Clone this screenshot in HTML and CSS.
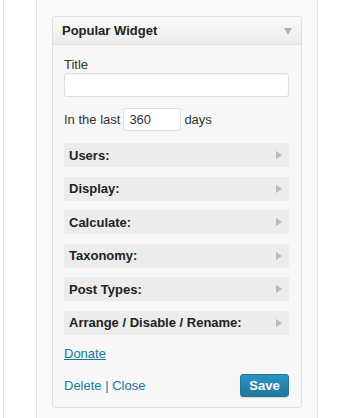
FILE: index.html
```html
<!DOCTYPE html>
<html lang="en">
<head>
    <meta charset="UTF-8">
    <title>Popular Widget</title>
    <link rel="stylesheet" href="styles.css">
</head>
<body>
    <div class="page">
        <div class="gutter"></div>
        <div class="panel">
            <div class="widget">
                <div class="widget-top">
                    <span class="widget-title">Popular Widget</span>
                    <span class="toggle"></span>
                </div>
                <div class="widget-inside">
                    <label class="field-label" for="title">Title</label>
                    <input type="text" id="title" class="wide-input">

                    <div class="days-row">
                        <span>In the last</span>
                        <input type="text" class="days-input" value="360">
                        <span>days</span>
                    </div>

                    <div class="section"><span>Users:</span><span class="arrow"></span></div>
                    <div class="section"><span>Display:</span><span class="arrow"></span></div>
                    <div class="section"><span>Calculate:</span><span class="arrow"></span></div>
                    <div class="section"><span>Taxonomy:</span><span class="arrow"></span></div>
                    <div class="section"><span>Post Types:</span><span class="arrow"></span></div>
                    <div class="section"><span>Arrange / Disable / Rename:</span><span class="arrow"></span></div>

                    <a href="#" class="donate">Donate</a>

                    <div class="widget-control">
                        <div class="links"><a href="#">Delete</a> | <a href="#">Close</a></div>
                        <button class="save">Save</button>
                    </div>
                </div>
            </div>
        </div>
    </div>
</body>
</html>
```

FILE: styles.css
```css
body {
    margin: 0;
    background: #fff;
    font-family: 'Liberation Sans', Arial, sans-serif;
    font-size: 13px;
    color: #333;
}

.page {
    display: flex;
    height: 418px;
    padding-left: 3px;
}

.gutter {
    width: 32px;
    border-left: 1px solid #e3e3e3;
    border-right: 1px solid #e3e3e3;
}

.panel {
    width: 281px;
    background: #f9f9f9;
    border-right: 1px solid #e3e3e3;
    padding: 16px 15px 0 15px;
    box-sizing: border-box;
}

.widget {
    border: 1px solid #dfdfdf;
    border-radius: 3px;
    background: #f7f7f7;
}

.widget-top {
    height: 27px;
    display: flex;
    align-items: center;
    justify-content: space-between;
    padding: 0 9px;
    background: linear-gradient(#f9f9f9, #ececec);
    border-bottom: 1px solid #dfdfdf;
    border-radius: 3px 3px 0 0;
}

.widget-title {
    font-weight: bold;
    color: #222;
    font-size: 13px;
}

.toggle {
    width: 0;
    height: 0;
    border-left: 4px solid transparent;
    border-right: 4px solid transparent;
    border-top: 7px solid #b3b3b3;
    margin-top: 2px;
}

.widget-inside {
    padding: 12px 12px 10px 11px;
    display: flex;
    flex-direction: column;
}

.field-label {
    line-height: 16px;
}

.wide-input {
    height: 24px;
    border: 1px solid #dfdfdf;
    border-radius: 3px;
    background: #fff;
    box-sizing: border-box;
    width: 100%;
    box-shadow: inset 0 1px 2px rgba(0, 0, 0, 0.05);
}

.days-row {
    display: flex;
    align-items: center;
    gap: 3px;
    margin-top: 11px;
    margin-bottom: 12px;
}

.days-input {
    width: 58px;
    height: 23px;
    box-sizing: border-box;
    border: 1px solid #dfdfdf;
    border-radius: 3px;
    padding: 0 5px;
    font-family: 'Liberation Sans', Arial, sans-serif;
    font-size: 13px;
    color: #333;
}

.section {
    height: 24px;
    display: flex;
    align-items: center;
    justify-content: space-between;
    background: #ececec;
    padding: 0 7px 0 5px;
    margin-bottom: 9.6px;
    font-weight: bold;
    color: #222;
}

.arrow {
    width: 0;
    height: 0;
    border-top: 4px solid transparent;
    border-bottom: 4px solid transparent;
    border-left: 6px solid #b8b8b8;
}

.donate {
    color: #21759b;
    align-self: flex-start;
    line-height: 16px;
    margin-top: 1px;
}

.widget-control {
    display: flex;
    justify-content: space-between;
    align-items: center;
    margin-top: 12px;
}

.links {
    color: #21759b;
}

.links a {
    color: #21759b;
    text-decoration: none;
}

.save {
    width: 49px;
    height: 23px;
    border: 1px solid #21759b;
    border-radius: 3px;
    background: linear-gradient(#2a95c5, #21759b);
    color: #fff;
    font-family: 'Liberation Sans', Arial, sans-serif;
    font-weight: bold;
    font-size: 13px;
    padding: 0;
    box-shadow: 0 1px 1px rgba(0, 0, 0, 0.15);
}
```
